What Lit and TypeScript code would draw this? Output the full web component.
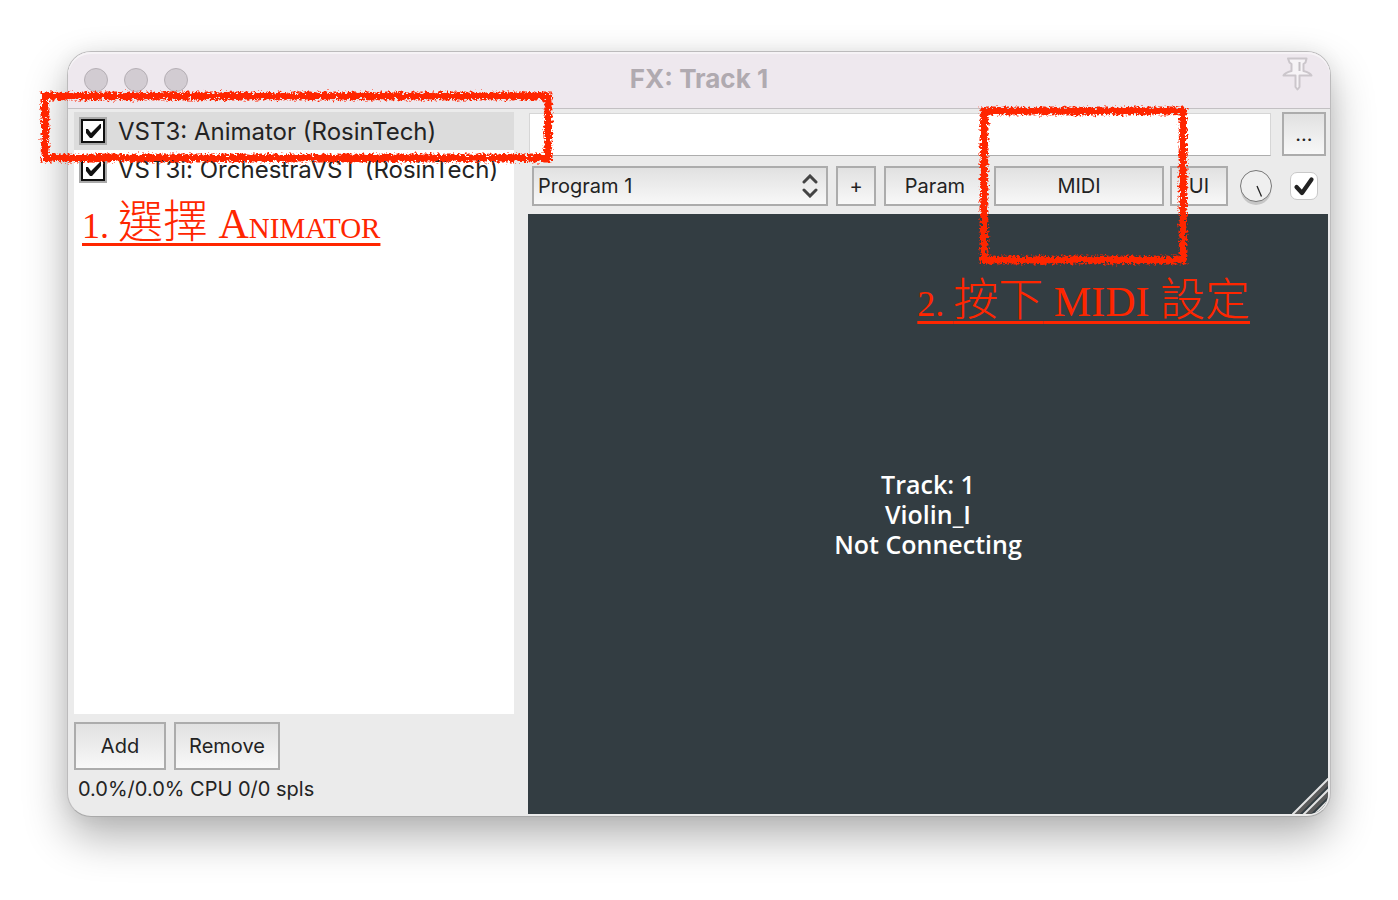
import { LitElement, html, svg, css } from "lit";
import { customElement, property, state } from "lit/decorators.js";

interface Plugin {
  name: string;
  enabled: boolean;
}

/* Rectangular frame drawn with a rough crayon stroke. */
@customElement("crayon-frame")
class CrayonFrame extends LitElement {
  @property({ type: Number }) seed = 1;

  static styles = css`
    :host {
      display: block;
      pointer-events: none;
    }
    .frame {
      display: block;
      width: 100%;
      height: 100%;
      overflow: visible;
    }
    .line {
      fill: none;
      stroke: #ff2600;
    }
    .core {
      stroke-width: 6;
    }
    .edge {
      stroke-width: 9;
    }
  `;

  render() {
    return html`<svg class="frame" aria-hidden="true">
      ${svg`
        <filter id="rough" filterUnits="userSpaceOnUse" x="-12" y="-12" width="120%" height="150%">
          <feTurbulence type="fractalNoise" baseFrequency="0.3" numOctaves="3" seed=${this.seed} result="n" />
          <feDisplacementMap in="SourceGraphic" in2="n" scale="7" xChannelSelector="R" yChannelSelector="G" />
        </filter>
        <filter id="grain" filterUnits="userSpaceOnUse" x="-12" y="-12" width="120%" height="150%">
          <feTurbulence type="fractalNoise" baseFrequency="0.4" numOctaves="2" seed=${this.seed + 4} result="n" />
          <feDisplacementMap in="SourceGraphic" in2="n" scale="6" xChannelSelector="G" yChannelSelector="R" result="d" />
          <feColorMatrix in="n" type="matrix" values="0 0 0 0 0  0 0 0 0 0  0 0 0 0 0  0 0 0 9 -4" result="m" />
          <feComposite in="d" in2="m" operator="in" />
        </filter>
        <rect class="line edge" x="0" y="0" width="100%" height="100%" filter="url(#grain)" />
        <rect class="line core" x="0" y="0" width="100%" height="100%" filter="url(#rough)" />
      `}
    </svg>`;
  }
}

@customElement("app-root")
class AppRoot extends LitElement {
  @state() private plugins: Plugin[] = [
    { name: "VST3: Animator (RosinTech)", enabled: true },
    { name: "VST3i: OrchestraVST (RosinTech)", enabled: true },
  ];
  @state() private selected = 0;

  static styles = css`
    :host {
      box-sizing: border-box;
      display: flex;
      min-height: 100vh;
      padding: 51px 67px 83px;
      background: #fff;
      color: #232323;
      font-family: Inter, "Noto Sans CJK TC", sans-serif;
      font-size: 20px;
      line-height: 24px;
    }
    * {
      box-sizing: border-box;
    }
    .window {
      flex: 1;
      min-width: 0;
      display: flex;
      flex-direction: column;
      border: 1px solid #bcbbbc;
      border-bottom-color: #a9a9a9;
      border-radius: 24px;
      background: #ebebeb;
      box-shadow: 0 20px 44px rgba(0, 0, 0, 0.3), 0 0 20px rgba(0, 0, 0, 0.06);
    }
    .titlebar {
      display: grid;
      grid-template-columns: 1fr auto 1fr;
      align-items: center;
      height: 57px;
      padding: 0 16px;
      border-bottom: 1px solid #c3c0c3;
      border-radius: 23px 23px 0 0;
      background: #eee8ee;
      box-shadow: inset 0 2px 0 #f6f3f6;
    }
    .lights {
      display: flex;
      gap: 16px;
    }
    .light {
      width: 24px;
      height: 24px;
      padding: 0;
      border: 1px solid #b5afb5;
      border-radius: 50%;
      background: #d2ccd2;
    }
    .title {
      margin: 0;
      padding-bottom: 2px;
      color: #b0aab0;
      font-size: 26px;
      font-weight: 700;
      line-height: 32px;
    }
    .pin {
      justify-self: end;
      align-self: start;
      padding: 4px 0 0;
      border: 0;
      background: none;
      line-height: 0;
    }
    .content {
      flex: 1;
      display: grid;
      grid-template-columns: 440px minmax(0, 1fr);
      gap: 14px;
      padding: 3px 2px 2px 6px;
    }
    .side {
      position: relative;
      z-index: 1;
      display: flex;
      flex-direction: column;
    }
    .list {
      flex: 1;
      margin: 0;
      padding: 0;
      list-style: none;
      background: #fff;
      font-size: 24px;
    }
    .item {
      display: flex;
      align-items: center;
      gap: 11px;
      height: 38px;
      padding: 0 5px;
      white-space: nowrap;
    }
    .item label {
      padding-top: 2px;
    }
    .item.selected {
      background: #dcdcdc;
    }
    .tick {
      position: relative;
      flex: none;
      width: 28px;
      height: 28px;
    }
    .tick input {
      appearance: none;
      display: block;
      width: 28px;
      height: 28px;
      margin: 0;
      border: 2px solid #111;
      outline: 0;
      background: #fff;
    }
    .item .tick input {
      width: 24px;
      height: 24px;
      margin: 2px;
      box-shadow: 0 0 0 2px #aaa;
    }
    .tick svg {
      position: absolute;
      inset: 0;
      pointer-events: none;
      visibility: hidden;
    }
    .tick input:checked + svg {
      visibility: visible;
    }
    .tick.bypass input {
      border: 1px solid #c9c9c9;
      border-radius: 7px;
    }
    .actions {
      display: flex;
      gap: 8px;
      padding-top: 8px;
    }
    .btn {
      padding: 0;
      border: 2px solid #acacac;
      border-radius: 0;
      background: linear-gradient(#e1e1e1, #f8f8f8);
      color: inherit;
      font: inherit;
      text-align: center;
    }
    .actions .btn {
      height: 48px;
    }
    .add {
      width: 92px;
    }
    .remove {
      width: 106px;
    }
    .status {
      margin: 0;
      padding: 7px 4px 13px;
    }
    .main {
      position: relative;
      display: flex;
      flex-direction: column;
      min-width: 0;
    }
    .comment {
      display: flex;
      align-items: center;
      gap: 11px;
      padding: 0 2px 0 1px;
    }
    .comment input {
      flex: 1;
      min-width: 0;
      height: 43px;
      padding: 0 8px;
      border: 1px solid #d6d6d6;
      border-bottom-color: #adadad;
      border-radius: 0;
      background: #fff;
      color: inherit;
      font: inherit;
    }
    .more {
      width: 44px;
      height: 44px;
    }
    .tools {
      display: flex;
      align-items: center;
      gap: 8px;
      padding: 10px 10px 8px 4px;
    }
    .tools .btn {
      flex: none;
      height: 40px;
    }
    .program {
      position: relative;
      flex: 1;
      min-width: 0;
    }
    .program select {
      appearance: none;
      display: block;
      width: 100%;
      padding: 0 40px 0 4px;
      text-align: left;
    }
    .program svg {
      position: absolute;
      top: 8px;
      right: 9px;
      pointer-events: none;
    }
    .plus {
      width: 40px;
    }
    .param {
      width: 102px;
    }
    .routing {
      display: flex;
      gap: 6px;
    }
    .midi {
      width: 170px;
    }
    .ui {
      width: 58px;
    }
    .knob {
      flex: none;
      display: block;
      margin: 0 10px 0 4px;
    }
    .plugin {
      position: relative;
      flex: 1;
      display: grid;
      place-content: center;
      min-height: 600px;
      border-bottom-right-radius: 20px;
      background: #333d42;
      overflow: hidden;
      color: #fff;
      font-family: "Open Sans", sans-serif;
      font-size: 25px;
      font-weight: 600;
      line-height: 30px;
      text-align: center;
    }
    .plugin p {
      margin: 0;
    }
    .grip {
      position: absolute;
      right: 0;
      bottom: 0;
    }
    .mark-list {
      position: absolute;
      top: -16px;
      left: -29px;
      width: 503px;
      height: 62px;
    }
    .mark-midi {
      position: absolute;
      top: -1px;
      right: 145px;
      width: 199px;
      height: 149px;
    }
    .note {
      position: absolute;
      margin: 0;
      color: #ff2600;
      font-family: "Liberation Serif", "Noto Sans CJK TC", serif;
      font-size: 42px;
      font-variant-caps: small-caps;
      line-height: 56px;
      white-space: nowrap;
      text-decoration: underline 3px;
      text-decoration-skip-ink: none;
      text-underline-offset: 5px;
    }
    .num {
      font-size: 36px;
    }
    .han {
      font-size: 45px;
      font-weight: 300;
    }
    .note-list {
      top: 83px;
      left: 8px;
    }
    .note-midi {
      top: 161px;
      right: 78px;
    }
  `;

  private toggle(index: number) {
    this.plugins = this.plugins.map((p, i) => (i === index ? { ...p, enabled: !p.enabled } : p));
  }

  private renderItem(p: Plugin, i: number) {
    return html`<li class="item ${i === this.selected ? "selected" : ""}" @click=${() => (this.selected = i)}>
      <span class="tick">
        <input type="checkbox" id="fx-${i}" .checked=${p.enabled} @change=${() => this.toggle(i)} />
        <svg width="28" height="28" viewBox="0 0 28 28" aria-hidden="true">
          <path d="M7 12h2l3 4 9-9h1v4L13 21h-2l-4-5z" fill="#111" />
        </svg>
      </span>
      <label for="fx-${i}">${p.name}</label>
    </li>`;
  }

  render() {
    return html`
      <section class="window">
        <header class="titlebar">
          <div class="lights">
            <button class="light" aria-label="Close"></button>
            <button class="light" aria-label="Minimize"></button>
            <button class="light" aria-label="Zoom"></button>
          </div>
          <h1 class="title">FX: Track 1</h1>
          <button class="pin" aria-label="Pin">
            <svg width="32" height="36" viewBox="0 0 32 36">
              <path
                d="M6 2.500h18.500l-1 4-2 1.500v7c4 1 7 2.500 8 4.500H17.500V31l-2 2.500-2-2.500V19.500H1.500c1-2 4-3.500 8-4.500V8l-2-1.500z"
                fill="#f6f3f6" stroke="#cbc6cb" stroke-width="2" stroke-linejoin="round" />
              <path d="M17.500 6v9" fill="none" stroke="#c5c0c5" stroke-width="2" />
            </svg>
          </button>
        </header>
        <div class="content">
          <div class="side">
            <ul class="list">
              ${this.plugins.map((p, i) => this.renderItem(p, i))}
            </ul>
            <div class="actions">
              <button class="btn add">Add</button>
              <button class="btn remove">Remove</button>
            </div>
            <p class="status">0.0%/0.0% CPU 0/0 spls</p>
            <crayon-frame class="mark-list" .seed=${3}></crayon-frame>
            <p class="note note-list"><span class="num">1. </span><span class="han">選擇</span> Animator</p>
          </div>
          <div class="main">
            <div class="comment">
              <input type="text" aria-label="Comment" />
              <button class="btn more">...</button>
            </div>
            <div class="tools">
              <div class="program">
                <select class="btn" aria-label="Program">
                  <option>Program 1</option>
                </select>
                <svg width="18" height="24" viewBox="0 0 18 24" aria-hidden="true">
                  <path d="M3 8l6-6 6 6M3 16l6 6 6-6" fill="none" stroke="#444" stroke-width="3"
                    stroke-linecap="round" stroke-linejoin="miter" />
                </svg>
              </div>
              <button class="btn plus">+</button>
              <button class="btn param">Param</button>
              <div class="routing">
                <button class="btn midi">MIDI</button>
                <button class="btn ui">UI</button>
              </div>
              <svg class="knob" width="32" height="40" viewBox="0 0 32 40" role="img" aria-label="Wet mix">
                <circle cx="16" cy="24" r="15" fill="#c6c6c6" />
                <circle cx="16" cy="20" r="15.500" fill="#efefef" stroke="#777" />
                <path d="M17 20l4.500 10.500" stroke="#222" stroke-width="1.300" />
              </svg>
              <span class="tick bypass">
                <input type="checkbox" aria-label="Enabled" checked />
                <svg width="28" height="28" viewBox="0 0 28 28" aria-hidden="true">
                  <path d="M6.500 15l5.500 6L21.500 7.500" fill="none" stroke="#222" stroke-width="4.200"
                    stroke-linecap="round" stroke-linejoin="round" />
                </svg>
              </span>
            </div>
            <div class="plugin">
              <p>Track: 1<br />Violin_I<br />Not Connecting</p>
              <svg class="grip" width="36" height="36" viewBox="0 0 36 36" aria-hidden="true">
                <g fill="none" stroke-width="4" stroke="#5a5a5a">
                  <path d="M3 38L38 3M14 38L38 14M25 38L38 25" />
                </g>
                <g fill="none" stroke-width="2" stroke="#e4e4e4">
                  <path d="M0 37L37 0M11 37L37 11M22 37L37 22" />
                </g>
              </svg>
            </div>
            <crayon-frame class="mark-midi" .seed=${8}></crayon-frame>
            <p class="note note-midi"><span class="num">2. </span><span class="han">按下</span> MIDI <span class="han">設定</span></p>
          </div>
        </div>
      </section>
    `;
  }
}
